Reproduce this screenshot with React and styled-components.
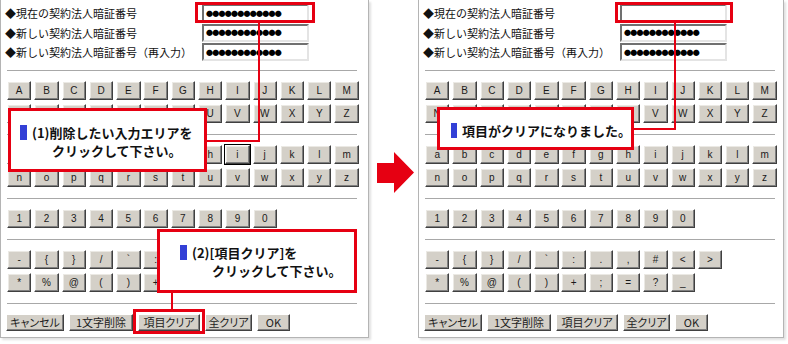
import React from 'react';
import styled, { createGlobalStyle } from 'styled-components';

const GlobalStyle = createGlobalStyle`
    body {
        margin: 0;
        background: #fff;
        font-family: "Noto Sans CJK JP", "Liberation Sans", sans-serif;
        color: #000;
    }
`

const RED = '#e60012';

const UPPER = [['A','B','C','D','E','F','G','H','I','J','K','L','M'], ['N','O','P','Q','R','S','T','U','V','W','X','Y','Z']];
const LOWER = [['a','b','c','d','e','f','g','h','i','j','k','l','m'], ['n','o','p','q','r','s','t','u','v','w','x','y','z']];
const DIGITS = [['1','2','3','4','5','6','7','8','9','0']];
const SYMBOLS = [['-','{','}','/','`',':','.',',','#','<','>'], ['*','%','@','(',')','+',';','=','?','_']];

const ACTIONS = [
    { label: 'キャンセル', w: 58 },
    { label: '1文字削除', w: 64 },
    { label: '項目クリア', w: 62 },
    { label: '全クリア', w: 47 },
    { label: 'OK', w: 33 },
];

const FIELDS = ['◆現在の契約法人暗証番号', '◆新しい契約法人暗証番号', '◆新しい契約法人暗証番号（再入力）'];


function Keyboard({ focusKey }) {
    const sections = [UPPER, LOWER, DIGITS, SYMBOLS];
    return (
        <>
            {sections.map((rows, i) => (
                <React.Fragment key={i}>
                    <Divider />
                    <KeySection>
                        {rows.map((row, j) => (
                            <KeyRow key={j}>
                                {row.map(k => <Key key={k} $focused={k === focusKey}>{k}</Key>)}
                            </KeyRow>
                        ))}
                    </KeySection>
                </React.Fragment>
            ))}
            <Divider />
            <ActionBar>
                {ACTIONS.map(a => <ActionButton key={a.label} $w={a.w}>{a.label}</ActionButton>)}
            </ActionBar>
        </>
    )
}


function PinForm({ values }) {
    return (
        <Form>
            {FIELDS.map((f, i) => (
                <FormRow key={f}>
                    <Label>{f}</Label>
                    <Field>{values[i] ? <Dots>●●●●●●●●●●●●</Dots> : null}</Field>
                </FormRow>
            ))}
        </Form>
    )
}


export default function App() {
    return (
        <Stage>
            <GlobalStyle />
            <Panel $w={369}>
                <PinForm values={[true, true, true]} />
                <Keyboard focusKey="i" />

                <Frame style={{ left: 194, top: 2, width: 120, height: 21 }} />
                <Line style={{ left: 257, top: 23, width: 2, height: 119 }} />
                <Line style={{ left: 206, top: 140, width: 53, height: 2 }} />
                <Callout style={{ left: 7, top: 108, width: 199, height: 64 }} $padLeft={9} $padTop={12}>
                    <CalloutLine><Marker />(1)削除したい入力エリアを</CalloutLine>
                    <CalloutLine $indent={32}>クリックして下さい。</CalloutLine>
                </Callout>

                <Callout style={{ left: 156, top: 229, width: 200, height: 64 }} $padLeft={20} $padTop={11}>
                    <CalloutLine><Marker />(2)[項目クリア]を</CalloutLine>
                    <CalloutLine $indent={32}>クリックして下さい。</CalloutLine>
                </Callout>
                <Line style={{ left: 170, top: 293, width: 2, height: 16 }} />
                <Frame style={{ left: 132, top: 309, width: 72, height: 25 }} />
            </Panel>

            <ArrowBox>
                <svg width="37" height="41" viewBox="0 0 37 41">
                    <polygon points="0,11 17,11 17,0 37,20.5 17,41 17,31 0,31" fill={RED} />
                </svg>
            </ArrowBox>

            <Panel $w={366}>
                <PinForm values={[false, true, true]} />
                <Keyboard />

                <Frame style={{ left: 196, top: 2, width: 118, height: 21 }} />
                <Line style={{ left: 255, top: 23, width: 2, height: 107 }} />
                <Line style={{ left: 215, top: 128, width: 42, height: 2 }} />
                <Callout style={{ left: 18, top: 107, width: 197, height: 43 }} $padLeft={11} $padTop={11}>
                    <CalloutLine><Marker />項目がクリアになりました。</CalloutLine>
                </Callout>
            </Panel>
        </Stage>
    )
}



const Stage = styled.div`
    display: flex;
    align-items: flex-start;
    width: 788px;
    height: 344px;
    overflow: hidden;
    background: #fff;
`

const Panel = styled.div`
    position: relative;
    box-sizing: border-box;
    width: ${p => p.$w}px;
    height: 338px;
    border: 1px solid #b4b4b4;
    border-top: none;
    box-shadow: 2px 2px 2px rgba(0,0,0,0.12);
    background: #fff;
    flex-shrink: 0;
`

const ArrowBox = styled.div`
    width: 49px;
    flex-shrink: 0;
    padding: 152px 0 0 8px;
    box-sizing: border-box;
    svg { display: block; }
`

const Form = styled.div`
    display: flex;
    flex-direction: column;
    gap: 1.5px;
    padding-top: 4px;
`

const FormRow = styled.div`
    display: grid;
    grid-template-columns: 201px 107px;
    height: 18px;
`

const Label = styled.div`
    padding-left: 4px;
    font-size: 11px;
    line-height: 18px;
    white-space: nowrap;
    color: #111;
`

const Field = styled.div`
    box-sizing: border-box;
    height: 18px;
    border: 2px solid;
    border-color: #707070 #e4e4e4 #e4e4e4 #707070;
    background: #fff;
    display: flex;
    align-items: center;
    padding-left: 2px;
`

const Dots = styled.span`
    font-size: 7px;
    letter-spacing: -0.75px;
    line-height: 1;
    color: #000;
`

const Divider = styled.div`
    height: 1px;
    width: 350px;
    margin: 9px 0 0 6px;
    background: #a8a8a8;
`

const KeySection = styled.div`
    display: flex;
    flex-direction: column;
    gap: 4px;
    padding: 10px 0 2px 6px;
`

const KeyRow = styled.div`
    display: grid;
    grid-template-columns: repeat(13, 24.4px);
    column-gap: 2.9px;
    height: 19px;
`

const Key = styled.div`
    box-sizing: border-box;
    height: 19px;
    background: #d4d0c8;
    border: 1px solid;
    border-color: #fff #404040 #404040 #fff;
    box-shadow: ${p => p.$focused
        ? 'inset -1px -1px 0 #808080, inset 1px 1px 0 #ebe9e4, 0 0 0 1px #000'
        : 'inset -1px -1px 0 #808080, inset 1px 1px 0 #ebe9e4'};
    font-family: "Liberation Sans", "DejaVu Sans", sans-serif;
    font-size: 10px;
    line-height: 17px;
    text-align: center;
    color: #1a1a1a;
`

const ActionBar = styled.div`
    display: flex;
    gap: 5px;
    padding: 10px 0 0 5px;
`

const ActionButton = styled.div`
    box-sizing: border-box;
    width: ${p => p.$w}px;
    height: 17px;
    background: #d4d0c8;
    border: 1px solid;
    border-color: #fff #404040 #404040 #fff;
    box-shadow: inset -1px -1px 0 #808080;
    font-size: 11px;
    font-feature-settings: "palt";
    line-height: 15px;
    text-align: center;
    white-space: nowrap;
    color: #222;
`

const Frame = styled.div`
    position: absolute;
    box-sizing: border-box;
    border: 3px solid ${RED};
`

const Line = styled.div`
    position: absolute;
    background: ${RED};
`

const Callout = styled.div`
    position: absolute;
    box-sizing: border-box;
    border: 3px solid ${RED};
    background: #fff;
    padding: ${p => p.$padTop}px 0 0 ${p => p.$padLeft}px;
`

const CalloutLine = styled.div`
    display: flex;
    align-items: center;
    height: 18px;
    padding-left: ${p => p.$indent || 0}px;
    font-size: 13px;
    font-weight: 700;
    white-space: nowrap;
    color: #111;
`

const Marker = styled.span`
    display: inline-block;
    width: 7px;
    height: 15px;
    margin-right: 5px;
    background: #3340d6;
`
